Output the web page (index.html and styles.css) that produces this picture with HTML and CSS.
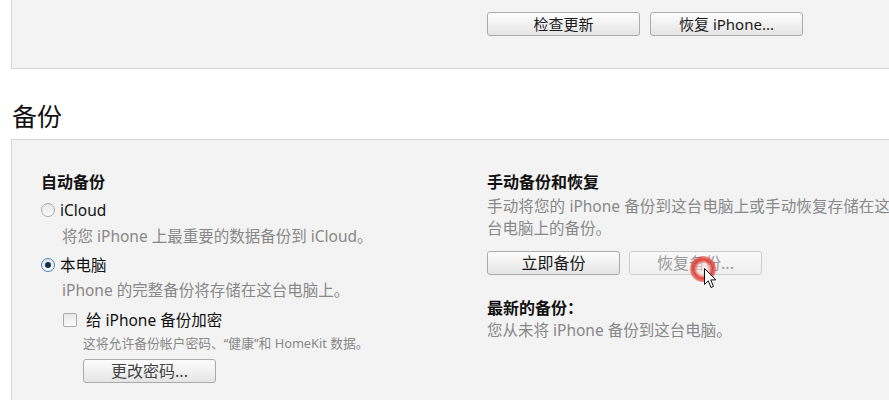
FILE: index.html
```html
<!DOCTYPE html>
<html lang="zh-CN">
<head>
<meta charset="utf-8">
<title>备份</title>
<link rel="stylesheet" href="styles.css">
</head>
<body>
<div class="page">
  <section class="panel panel-top">
    <div class="btn-row">
      <button class="btn btn-wide">检查更新</button>
      <button class="btn btn-wide">恢复 iPhone...</button>
    </div>
  </section>

  <h2 class="section-title">备份</h2>

  <section class="panel panel-backup">
    <div class="col col-left">
      <h3 class="group-title">自动备份</h3>
      <label class="option option-first">
        <span class="radio"></span>
        <span class="option-label">iCloud</span>
      </label>
      <p class="desc desc-radio">将您 iPhone 上最重要的数据备份到 iCloud。</p>
      <label class="option option-second">
        <span class="radio radio-on"><span class="radio-dot"></span></span>
        <span class="option-label">本电脑</span>
      </label>
      <p class="desc desc-radio desc-second">iPhone 的完整备份将存储在这台电脑上。</p>
      <label class="check-row">
        <span class="checkbox"></span>
        <span class="option-label">给 iPhone 备份加密</span>
      </label>
      <p class="small-desc">这将允许备份帐户密码、“健康”和 HomeKit 数据。</p>
      <button class="btn btn-mid btn-change">更改密码...</button>
    </div>

    <div class="col col-right">
      <h3 class="group-title">手动备份和恢复</h3>
      <p class="desc desc-justify">手动将您的 iPhone 备份到这台电脑上或手动恢复存储在这台电脑上的备份。</p>
      <div class="btn-row btn-row-right">
        <button class="btn btn-mid">立即备份</button>
        <button class="btn btn-mid btn-disabled">恢复备份...</button>
      </div>
      <h3 class="group-title latest-title">最新的备份：</h3>
      <p class="desc latest-desc">您从未将 iPhone 备份到这台电脑。</p>
    </div>
  </section>
</div>

<div class="click-ring"></div>
<svg class="cursor" width="13" height="21" viewBox="0 0 13 21" aria-hidden="true">
  <path d="M0.5 0.5 L0.5 16.5 L4.3 12.8 L7 19.5 L9.4 18.5 L6.8 11.9 L11.8 11.9 Z" fill="#fff" stroke="#111" stroke-width="1" stroke-linejoin="round"/>
</svg>
</body>
</html>
```

FILE: styles.css
```css
* {
  box-sizing: border-box;
}

html, body {
  margin: 0;
  padding: 0;
  background: #ffffff;
  overflow: hidden;
}

body {
  width: 889px;
  height: 400px;
  font-family: "Noto Sans", "Noto Sans CJK SC", sans-serif;
  color: #111;
  position: relative;
}

.page {
  padding-left: 11px;
  width: 1100px;
}

.panel {
  background: #f3f3f3;
  border-left: 1px solid #d3d3d3;
}

.panel-top {
  height: 69px;
  border-bottom: 1px solid #d3d3d3;
  padding: 12px 0 0 475px;
}

.btn-row {
  display: flex;
  gap: 10px;
}

.btn {
  font-family: "Noto Sans", "Noto Sans CJK SC", sans-serif;
  font-size: 15px;
  line-height: 22px;
  height: 24px;
  padding: 0;
  color: #1a1a1a;
  border: 1px solid #ababab;
  border-radius: 3px;
  background: linear-gradient(#fdfdfd, #f1f1f1 50%, #e4e4e4);
  text-align: center;
}

.btn-wide {
  width: 153px;
}

.btn-mid {
  width: 133px;
  font-size: 16px;
}

.btn-disabled {
  color: #9a9a9a;
  border-color: #cdcdcd;
  background: linear-gradient(#f9f9f9, #efefef);
}

.section-title {
  margin: 32px 0 8px 1px;
  font-size: 25px;
  line-height: 30px;
  font-weight: 400;
  color: #111;
}

.panel-backup {
  height: 270px;
  border-top: 1px solid #d3d3d3;
  padding: 32px 0 0 29px;
  display: grid;
  grid-template-columns: 446px 420px;
  align-items: start;
}

.col {
  display: flex;
  flex-direction: column;
  align-items: flex-start;
}

.group-title {
  margin: 0;
  font-size: 16px;
  line-height: 20px;
  font-weight: 700;
  color: #111;
}

.option {
  display: flex;
  align-items: center;
  gap: 5px;
  height: 20px;
  font-size: 15.5px;
  line-height: 20px;
  color: #111;
}

.option-first {
  margin-top: 8px;
}

.option-second {
  margin-top: 9px;
}

.radio {
  width: 14px;
  height: 14px;
  border-radius: 50%;
  border: 1px solid #a9a9a9;
  background: linear-gradient(#e6e6e6, #fbfbfb);
  display: flex;
  align-items: center;
  justify-content: center;
}

.radio-on {
  border-color: #4a82bd;
  background: linear-gradient(#dfeaf6, #f6f9fd);
}

.radio-dot {
  width: 6px;
  height: 6px;
  border-radius: 50%;
  background: #1d2f47;
}

.desc {
  margin: 0;
  font-size: 15.5px;
  line-height: 20px;
  color: #888888;
}

.desc-radio {
  margin-top: 6px;
  padding-left: 21px;
}

.desc-second {
  margin-top: 5px;
}

.check-row {
  display: flex;
  align-items: center;
  gap: 9px;
  margin-top: 10px;
  margin-left: 22px;
  height: 20px;
  font-size: 15.5px;
  line-height: 20px;
  color: #111;
}

.checkbox {
  width: 14px;
  height: 14px;
  border: 1px solid #ababab;
  border-radius: 2px;
  background: linear-gradient(#e9e9e9, #fbfbfb);
}

.small-desc {
  margin: 5px 0 0 42px;
  font-size: 12.8px;
  line-height: 16px;
  color: #888888;
}

.btn-change {
  margin: 8px 0 0 42px;
  color: #444;
}

.desc-justify {
  margin-top: 3px;
  width: 403px;
  line-height: 22px;
  text-align: justify;
}

.btn-row-right {
  margin-top: 12px;
  gap: 9px;
}

.latest-title {
  margin-top: 23px;
}

.latest-desc {
  margin-top: 2px;
}

.click-ring {
  position: absolute;
  left: 690px;
  top: 256px;
  width: 26px;
  height: 26px;
  border-radius: 50%;
  background: radial-gradient(circle, rgba(255, 225, 220, 0.55) 0 30%, rgba(224, 60, 50, 0.95) 50%, rgba(224, 60, 50, 0.55) 70%, rgba(224, 60, 50, 0) 100%);
}

.cursor {
  position: absolute;
  left: 704px;
  top: 268px;
}
```
